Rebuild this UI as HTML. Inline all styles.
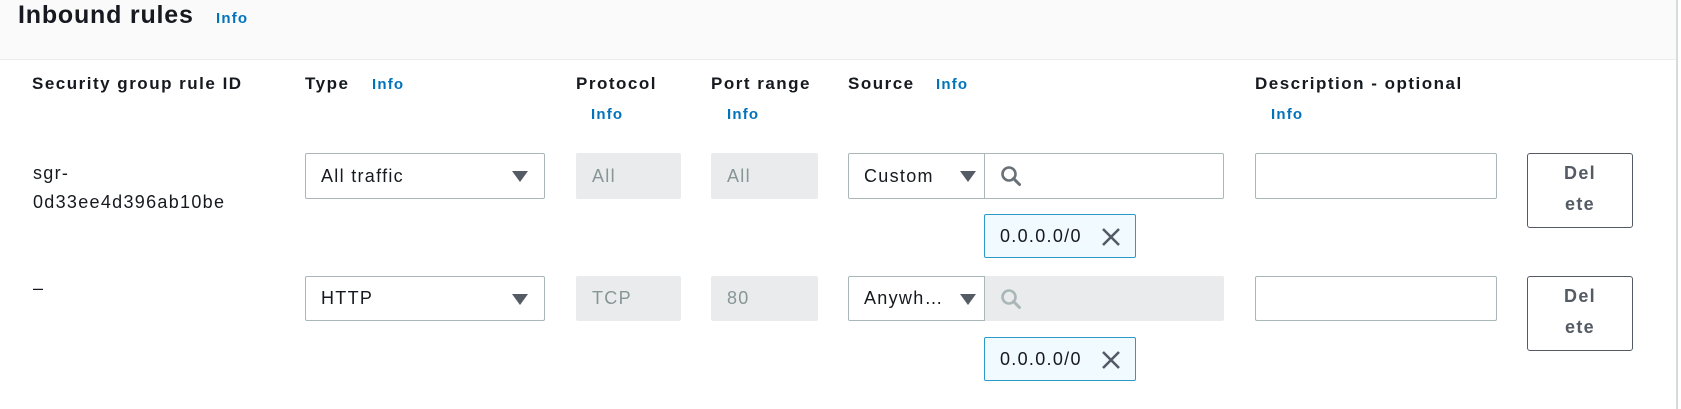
<!DOCTYPE html>
<html><head><meta charset="utf-8"><style>
*{box-sizing:border-box;margin:0;padding:0}
body{width:1681px;height:409px;background:#fff;font-family:"Liberation Sans",sans-serif;color:#16191f;position:relative;overflow:hidden;letter-spacing:1.3px}
.a{position:absolute;white-space:nowrap}
.hdr{position:absolute;left:0;top:0;width:1677px;height:60px;background:#fafafa;border-bottom:1px solid #eaeded}
.vline{position:absolute;left:1676px;top:0;width:2px;height:409px;background:#d5dbdb}
h1{position:absolute;left:18px;top:1px;font-size:25px;font-weight:bold;letter-spacing:0.8px}
.info{color:#0073bb;font-weight:bold;font-size:15px;letter-spacing:1.2px}
.th{font-size:17px;font-weight:bold;letter-spacing:1.5px}
.box{position:absolute;border:1px solid #aab7b8;border-radius:2px;background:#fff;font-size:18px;display:flex;align-items:center;padding-left:15px}
.dis{background:#e9ebed;border-color:#e9ebed;color:#879596}
.arrow{position:absolute;right:16px;top:50%;margin-top:-5px;width:0;height:0;border-left:8px solid transparent;border-right:8px solid transparent;border-top:11px solid #545b64}
.tok{position:absolute;border:1px solid #2b9ac7;border-radius:2px;background:#f1faff;font-size:18px;display:flex;align-items:center;padding-left:15px}
.del{position:absolute;border:1px solid #545b64;border-radius:3px;background:#fff;color:#545b64;font-weight:bold;font-size:18px;text-align:center;line-height:31px;padding-top:4px}
.txt{font-size:18px}
</style></head><body>
<div class="hdr"></div>
<div class="vline"></div>
<h1>Inbound rules</h1>
<div class="a info" style="left:216px;top:10px">Info</div>

<div class="a th" style="left:32px;top:74px">Security group rule ID</div>
<div class="a th" style="left:305px;top:74px">Type</div>
<div class="a info" style="left:372px;top:76px">Info</div>
<div class="a th" style="left:576px;top:74px">Protocol</div>
<div class="a info" style="left:591px;top:106px">Info</div>
<div class="a th" style="left:711px;top:74px">Port range</div>
<div class="a info" style="left:727px;top:106px">Info</div>
<div class="a th" style="left:848px;top:74px">Source</div>
<div class="a info" style="left:936px;top:76px">Info</div>
<div class="a th" style="left:1255px;top:74px">Description - optional</div>
<div class="a info" style="left:1271px;top:106px">Info</div>

<!-- row 1 -->
<div class="a txt" style="left:33px;top:159px;line-height:29px">sgr-<br>0d33ee4d396ab10be</div>
<div class="box" style="left:305px;top:153px;width:240px;height:46px">All traffic<span class="arrow"></span></div>
<div class="box dis" style="left:576px;top:153px;width:105px;height:46px">All</div>
<div class="box dis" style="left:711px;top:153px;width:107px;height:46px">All</div>
<div class="box" style="left:848px;top:153px;width:137px;height:46px;border-radius:2px 0 0 2px">Custom<span class="arrow" style="right:8px"></span></div>
<div class="box" style="left:984px;top:153px;width:240px;height:46px;border-radius:0 2px 2px 0">
<svg width="22" height="22" viewBox="0 0 22 22"><circle cx="9" cy="9" r="6.5" fill="none" stroke="#687078" stroke-width="2.6"/><path d="M13.5 13.5L19.5 19.5" stroke="#687078" stroke-width="3" stroke-linecap="round"/></svg></div>
<div class="box" style="left:1255px;top:153px;width:242px;height:46px"></div>
<div class="del" style="left:1527px;top:153px;width:106px;height:75px">Del<br>ete</div>
<div class="tok" style="left:984px;top:214px;width:152px;height:44px">0.0.0.0/0
<svg style="position:absolute;right:14px;top:12px" width="20" height="20" viewBox="0 0 20 20"><path d="M2 2L18 18M18 2L2 18" stroke="#545b64" stroke-width="2.6"/></svg></div>

<!-- row 2 -->
<div class="a txt" style="left:33px;top:278px">–</div>
<div class="box" style="left:305px;top:276px;width:240px;height:45px">HTTP<span class="arrow"></span></div>
<div class="box dis" style="left:576px;top:276px;width:105px;height:45px">TCP</div>
<div class="box dis" style="left:711px;top:276px;width:107px;height:45px">80</div>
<div class="box" style="left:848px;top:276px;width:137px;height:45px;border-radius:2px 0 0 2px;z-index:2">Anywh…<span class="arrow" style="right:8px"></span></div>
<div class="box dis" style="left:984px;top:276px;width:240px;height:45px">
<svg width="22" height="22" viewBox="0 0 22 22"><circle cx="9" cy="9" r="6.5" fill="none" stroke="#aab7b8" stroke-width="2.6"/><path d="M13.5 13.5L19.5 19.5" stroke="#aab7b8" stroke-width="3" stroke-linecap="round"/></svg></div>
<div class="box" style="left:1255px;top:276px;width:242px;height:45px"></div>
<div class="del" style="left:1527px;top:276px;width:106px;height:75px">Del<br>ete</div>
<div class="tok" style="left:984px;top:337px;width:152px;height:44px">0.0.0.0/0
<svg style="position:absolute;right:14px;top:12px" width="20" height="20" viewBox="0 0 20 20"><path d="M2 2L18 18M18 2L2 18" stroke="#545b64" stroke-width="2.6"/></svg></div>
</body></html>
